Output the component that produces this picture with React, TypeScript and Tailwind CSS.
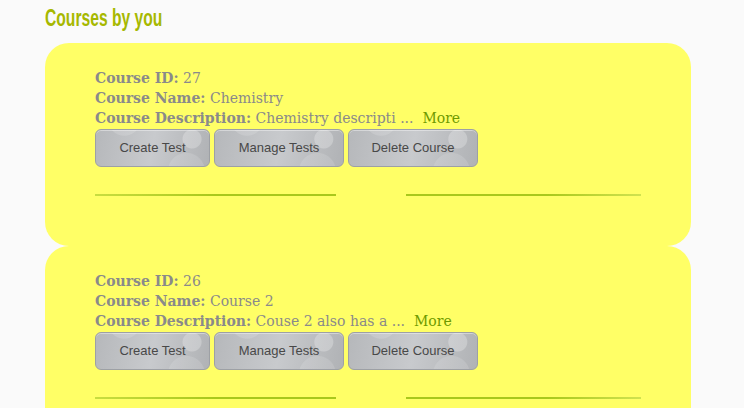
import React from 'react';

const courses = [
  { id: 27, name: 'Chemistry', desc: 'Chemistry descripti ...' },
  { id: 26, name: 'Course 2', desc: 'Couse 2 also has a  ...' },
];

const buttons = [
  { label: 'Create Test', w: 'w-[115px]' },
  { label: 'Manage Tests', w: 'w-[130px]' },
  { label: 'Delete Course', w: 'w-[130px]' },
];

function Bubbly({ label, w }: { label: string; w: string }) {
  return (
    <button
      className={`${w} h-[38px] rounded-[6px] border border-[#9da0a5] text-[13px] text-[#484848] font-['Liberation_Sans',sans-serif] bg-[radial-gradient(circle_at_85%_25%,rgba(255,255,255,0.25)_0,rgba(255,255,255,0.25)_9px,transparent_10px),radial-gradient(circle_at_80%_115%,rgba(255,255,255,0.13)_0,rgba(255,255,255,0.13)_18px,transparent_19px),radial-gradient(circle_at_25%_-30%,rgba(255,255,255,0.15)_0,rgba(255,255,255,0.15)_16px,transparent_17px),linear-gradient(100deg,#b6b8bb_0%,#c8cacd_50%,#b0b2b5_100%)] shadow-[inset_0_1px_0_rgba(255,255,255,0.4)]`}
    >
      {label}
    </button>
  );
}

function CourseCard({ id, name, desc }: { id: number; name: string; desc: string }) {
  return (
    <div className="bg-[#ffff66] rounded-[24px] px-[50px] pt-[25px] h-[203px]">
      <div className="font-['DejaVu_Serif',serif] text-[14px] leading-[20px] text-[#8a8a8a]">
        <div>
          <b>Course ID:</b> {id}
        </div>
        <div>
          <b>Course Name:</b> {name}
        </div>
        <div>
          <b>Course Description:</b> {desc}{' '}
          <span className="text-[#6f9a00]">&nbsp;More</span>
        </div>
      </div>
      <div className="flex gap-[4px] mt-[1px]">
        {buttons.map((b) => (
          <Bubbly key={b.label} label={b.label} w={b.w} />
        ))}
      </div>
      <div className="flex items-center mt-[27px] w-[546px]">
        <div className="h-[2px] w-[241px] bg-[linear-gradient(90deg,#c8dd40,#a9c81c_50%,#a9c81c)]" />
        <div className="flex-1" />
        <div className="h-[2px] w-[235px] bg-[linear-gradient(90deg,#a9c81c,#a9c81c_60%,#d0e250)]" />
      </div>
    </div>
  );
}

export default function App() {
  return (
    <div className="w-[744px] h-[408px] overflow-hidden bg-[#fafafa]">
      <div className="pl-[45px] pr-[53px] pt-[4px]">
        <h1 className="font-['Liberation_Sans',sans-serif] font-bold text-[23px] leading-[28px] h-[28px] text-[#a6b800] scale-x-[0.68] origin-top-left whitespace-nowrap mb-[11px]">
          Courses by you
        </h1>
        <div className="flex flex-col">
          {courses.map((c) => (
            <CourseCard key={c.id} {...c} />
          ))}
        </div>
      </div>
    </div>
  );
}
